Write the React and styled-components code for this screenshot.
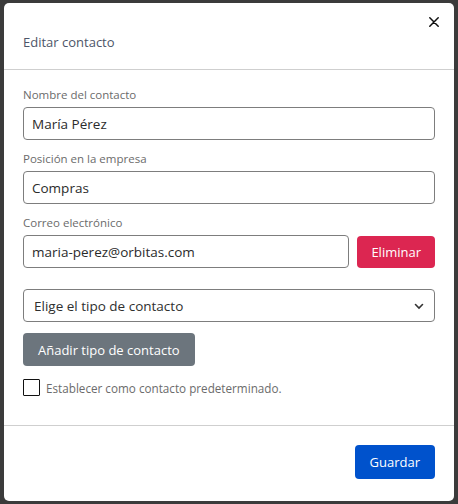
import React from "react";
import styled, { createGlobalStyle } from "styled-components";

const Global = createGlobalStyle`
  html, body { margin: 0; padding: 0; }
  body {
    background: #3d3d3d;
    font-family: "Open Sans", "Liberation Sans", sans-serif;
    width: 458px;
    height: 504px;
    overflow: hidden;
  }
  * { box-sizing: border-box; }
`;

const Backdrop = styled.div`
  width: 458px;
  height: 504px;
  padding: 3px 4px;
  background: #3b3b3b;
`;

const Modal = styled.div`
  background: #fff;
  border-radius: 5px;
  width: 450px;
  height: 498px;
  display: flex;
  flex-direction: column;
  position: relative;
`;

const Header = styled.div`
  height: 67px;
  padding: 0 19px;
  display: flex;
  align-items: center;
  padding-top: 12px;
  border-bottom: 1px solid #cfcfcf;
`;

const Title = styled.h5`
  margin: 0;
  font-size: 13px;
  font-weight: 500;
  color: #4d5568;
`;

const Close = styled.button`
  position: absolute;
  top: 9px;
  right: 10px;
  width: 20px;
  height: 20px;
  padding: 0;
  border: 0;
  background: transparent;
  display: flex;
  align-items: center;
  justify-content: center;
`;

const Body = styled.div`
  padding: 18px 19px 0;
  display: flex;
  flex-direction: column;
  height: 356px;
  border-bottom: 1px solid #cfcfcf;
`;

const Field = styled.div`
  display: flex;
  flex-direction: column;
  margin-bottom: ${(p) => p.mb ?? 12}px;
`;

const Label = styled.label`
  font-size: 11.5px;
  color: #6b6b6b;
  margin-bottom: 5px;
  line-height: 14px;
`;

const Input = styled.input`
  height: 33px;
  border: 1px solid #7d7d7d;
  border-radius: 4px;
  padding: 0 8px;
  font-family: inherit;
  font-size: 13.5px;
  color: #2b2b2b;
  width: 100%;
  outline: none;
`;

const Row = styled.div`
  display: flex;
  gap: 8px;
  align-items: center;
`;

const Button = styled.button`
  height: ${(p) => p.h || 33}px;
  border: 0;
  border-radius: 4px;
  background: ${(p) => p.bg};
  color: #fff;
  font-family: inherit;
  font-size: 13px;
  font-weight: 500;
  padding: 0 ${(p) => p.px || 14}px;
  flex-shrink: 0;
`;

const Select = styled.div`
  height: 33px;
  margin-bottom: 11px;
  border: 1px solid #7d7d7d;
  border-radius: 4px;
  padding: 0 10px;
  display: flex;
  align-items: center;
  justify-content: space-between;
  font-size: 13.5px;
  color: #2f2f2f;
`;

const CheckRow = styled.label`
  display: flex;
  align-items: center;
  gap: 6px;
  margin-top: 13px;
  font-size: 11.7px;
  color: #6b6b6b;
`;

const Box = styled.span`
  width: 17px;
  height: 17px;
  border: 1px solid #111;
  border-radius: 1px;
  display: inline-block;
`;

const Footer = styled.div`
  flex: 1;
  display: flex;
  justify-content: flex-end;
  align-items: flex-start;
  padding: 19px 19px 0;
`;

export default function App() {
  return (
    <>
      <Global />
      <Backdrop>
        <Modal>
          <Close aria-label="Cerrar">
            <svg width="10" height="10" viewBox="0 0 10 10">
              <path d="M0.8 0.8L9.2 9.2M9.2 0.8L0.8 9.2" stroke="#111" strokeWidth="1.5" strokeLinecap="round" />
            </svg>
          </Close>
          <Header>
            <Title>Editar contacto</Title>
          </Header>
          <Body>
            <Field>
              <Label>Nombre del contacto</Label>
              <Input defaultValue="María Pérez" />
            </Field>
            <Field>
              <Label>Posición en la empresa</Label>
              <Input defaultValue="Compras" />
            </Field>
            <Field mb={21}>
              <Label>Correo electrónico</Label>
              <Row>
                <Input defaultValue="maria-perez@orbitas.com" />
                <Button bg="#dc2651" px={14} h={32}>Eliminar</Button>
              </Row>
            </Field>
            <Select>
              <span>Elige el tipo de contacto</span>
              <svg width="10" height="8" viewBox="0 0 10 8">
                <path d="M1.5 2.5L5 6L8.5 2.5" stroke="#333" strokeWidth="1.6" fill="none" strokeLinecap="round" />
              </svg>
            </Select>
            <div>
              <Button bg="#6c757d" px={15}>Añadir tipo de contacto</Button>
            </div>
            <CheckRow>
              <Box />
              Establecer como contacto predeterminado.
            </CheckRow>
          </Body>
          <Footer>
            <Button bg="#0052cc" px={15} h={34}>Guardar</Button>
          </Footer>
        </Modal>
      </Backdrop>
    </>
  );
}
